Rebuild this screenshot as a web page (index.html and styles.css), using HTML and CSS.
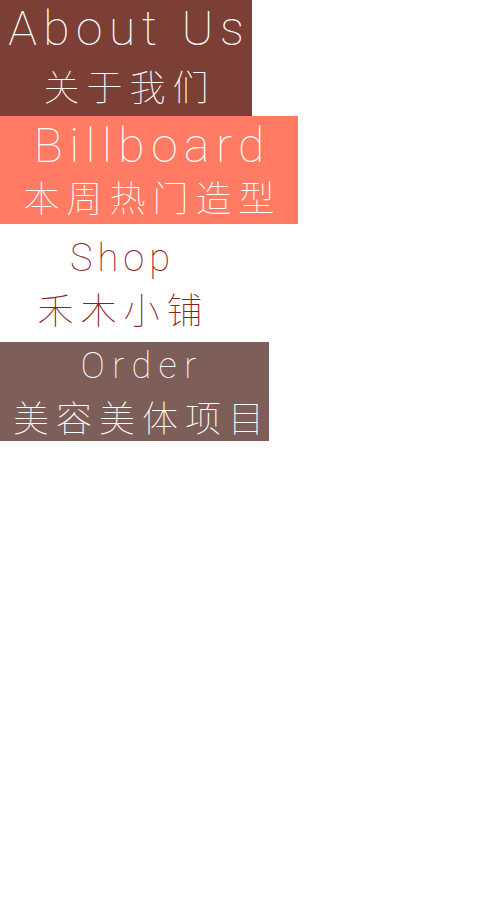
FILE: index.html
```html
<!DOCTYPE html>
<html lang="zh-CN">
<head>
<meta charset="utf-8">
<title>Menu</title>
<link rel="stylesheet" href="styles.css">
</head>
<body>
<nav class="menu">
  <a class="item item-about" href="#">
    <span class="en">About Us</span>
    <span class="zh">关于我们</span>
  </a>
  <a class="item item-billboard" href="#">
    <span class="en">Billboard</span>
    <span class="zh">本周热门造型</span>
  </a>
  <a class="item item-shop" href="#">
    <span class="en en-small en-shop">Shop</span>
    <span class="zh">禾木小铺</span>
  </a>
  <a class="item item-order" href="#">
    <span class="en en-small en-order">Order</span>
    <span class="zh">美容美体项目</span>
  </a>
</nav>
</body>
</html>
```

FILE: styles.css
```css
html, body {
  margin: 0;
  padding: 0;
  background: #ffffff;
}

.menu {
  display: flex;
  flex-direction: column;
  align-items: flex-start;
}

.item {
  display: flex;
  flex-direction: column;
  align-items: center;
  text-decoration: none;
  color: #ffffff;
  box-sizing: border-box;
}

.en {
  font-family: Roboto, "Noto Sans", sans-serif;
  font-weight: 100;
  font-size: 48px;
  line-height: 57px;
  letter-spacing: 6.5px;
  margin-right: -6.5px;
  white-space: nowrap;
}

.en-small {
  font-size: 38px;
  line-height: 45px;
}

.en-shop {
  letter-spacing: 5px;
  margin-right: -5px;
}

.en-order {
  font-size: 36px;
  letter-spacing: 7.5px;
  margin-right: -7.5px;
}

.zh {
  font-family: "Noto Sans CJK SC", sans-serif;
  font-weight: 100;
  font-size: 36px;
  line-height: 40px;
  letter-spacing: 7px;
  margin-right: -7px;
  white-space: nowrap;
}

.item-about {
  width: 252px;
  height: 116px;
  background: #7b3f35;
  gap: 8px;
}

.item-billboard {
  width: 298px;
  height: 108px;
  background: #ff7b64;
  padding-top: 1px;
  gap: 2px;
}

.item-shop {
  width: 240px;
  height: 118px;
  color: #8b2020;
  padding-top: 12px;
  gap: 7px;
}

.item-order {
  width: 269px;
  height: 99px;
  background: #7d5e58;
  padding-top: 2px;
  padding-left: 8px;
  gap: 7px;
}
```
